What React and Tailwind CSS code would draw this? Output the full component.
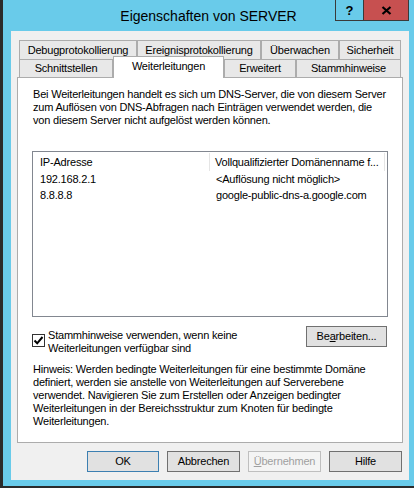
import React from "react";

const rowOneTabs = [
  { label: "Debugprotokollierung", w: "w-[118px]" },
  { label: "Ereignisprotokollierung", w: "w-[124px]" },
  { label: "Überwachen", w: "w-[78px]" },
  { label: "Sicherheit", w: "w-[62px]" },
];

const forwarders = [
  { ip: "192.168.2.1", name: "<Auflösung nicht möglich>" },
  { ip: "8.8.8.8", name: "google-public-dns-a.google.com" },
];

const Tab = ({ label, w, h = "h-[18px]" }) => (
  <div
    className={`${w} ${h} flex items-center justify-center border-t border-x border-[#acacac] bg-[#e8e8e8] whitespace-nowrap`}
  >
    {label}
  </div>
);

const DialogButton = ({ children, variant = "normal", w = "w-[73px]" }) => {
  const styles = {
    normal: "border-[#707070] bg-[#e1e1e1] text-black",
    default: "border-[#3c7fb1] bg-[#e1e1e1] text-black",
    disabled: "border-[#bfbfbf] bg-[#f4f4f4] text-[#a0a0a0]",
  };
  return (
    <button
      className={`${w} h-[21px] border ${styles[variant]} flex items-center justify-center leading-[13px]`}
    >
      {children}
    </button>
  );
};

const App = () => {
  return (
    <div className="w-[414px] h-[488px] bg-[#69cbea] border-l-[3px] border-b-[2px] border-[#2b2b2b] flex flex-col relative overflow-hidden font-['Liberation_Sans',Arial,sans-serif] text-[11px] leading-[13px] tracking-[-0.2px] text-black">
      {/* title bar */}
      <div className="h-[31px] shrink-0 flex justify-center pt-[8px]">
        <span className="text-[14px] leading-[16px] tracking-normal">
          Eigenschaften von SERVER
        </span>
      </div>
      <div className="absolute top-0 right-[5px] flex">
        <div className="w-[29px] h-[21px] border-x border-b border-[#3a3a3a] flex items-center justify-center font-bold text-[13px] tracking-normal">
          ?
        </div>
        <div className="w-[45px] h-[21px] border-r border-b border-[#3a3a3a] bg-[#c75050] flex items-center justify-center">
          <svg width="11" height="9" viewBox="0 0 11 9">
            <path d="M1.5 1 L9.5 8 M9.5 1 L1.5 8" stroke="#000" strokeWidth="2.2" />
          </svg>
        </div>
      </div>

      {/* client area */}
      <div className="ml-[8px] w-[398px] h-[449px] bg-[#f0f0f0] pt-[9px] flex flex-col">
        <div className="ml-[8px] flex h-[19px]">
          {rowOneTabs.map((t) => (
            <Tab key={t.label} label={t.label} w={t.w} h="h-[19px]" />
          ))}
        </div>
        <div className="ml-[8px] -mt-[3px] flex items-end h-[21px] relative z-10">
          <Tab label="Schnittstellen" w="w-[94px]" />
          <div className="w-[111px] h-[22px] -mb-px flex items-center justify-center pb-[3px] border-t border-x border-[#acacac] bg-white whitespace-nowrap">
            Weiterleitungen
          </div>
          <Tab label="Erweitert" w="w-[72px]" />
          <Tab label="Stammhinweise" w="w-[105px]" />
        </div>

        {/* tab panel */}
        <div className="mx-[6px] h-[366px] border border-[#acacac] bg-white px-[14px] pt-[10px] flex flex-col">
          <p className="pl-px whitespace-nowrap">
            Bei Weiterleitungen handelt es sich um DNS-Server, die von diesem Server
            <br />
            zum Auflösen von DNS-Abfragen nach Einträgen verwendet werden, die
            <br />
            von diesem Server nicht aufgelöst werden können.
          </p>

          <div className="mt-[24px] h-[166px] shrink-0 border border-[#828790] bg-white flex flex-col">
            <div className="h-[19px] flex pt-px">
              <div className="w-[177px] flex items-center pl-[7px] border-r border-[#e5e5e5]">
                IP-Adresse
              </div>
              <div className="w-[175px] flex items-center pl-[5px] border-r border-[#e5e5e5] whitespace-nowrap overflow-hidden">
                Vollqualifizierter Domänenname f...
              </div>
            </div>
            {forwarders.map((f) => (
              <div key={f.ip} className="h-[16px] flex items-center">
                <div className="w-[177px] pl-[7px]">{f.ip}</div>
                <div className="pl-[6px] whitespace-nowrap">{f.name}</div>
              </div>
            ))}
          </div>

          <div className="mt-[9px] flex justify-between items-start pr-px">
            <div className="mt-[3px] flex items-start">
              <div className="mt-[5px] w-[13px] h-[13px] border border-[#333] bg-white flex items-center justify-center">
                <svg width="11" height="11" viewBox="0 0 11 11">
                  <path d="M1.5 5.5 L4.2 8.3 L9.5 2" fill="none" stroke="#000" strokeWidth="2" />
                </svg>
              </div>
              <label className="ml-[3px] whitespace-nowrap">
                Stammhinweise verwenden, wenn keine
                <br />
                Weiterleitungen verfügbar sind
              </label>
            </div>
            <DialogButton w="w-[81px]">
              <span>
                Be<span className="underline">a</span>rbeiten...
              </span>
            </DialogButton>
          </div>

          <p className="mt-[8px] pl-px whitespace-nowrap">
            Hinweis: Werden bedingte Weiterleitungen für eine bestimmte Domäne
            <br />
            definiert, werden sie anstelle von Weiterleitungen auf Serverebene
            <br />
            verwendet. Navigieren Sie zum Erstellen oder Anzeigen bedingter
            <br />
            Weiterleitungen in der Bereichsstruktur zum Knoten für bedingte
            <br />
            Weiterleitungen.
          </p>
        </div>

        {/* dialog buttons */}
        <div className="mt-[8px] mr-[7px] flex justify-end gap-[8px]">
          <DialogButton variant="default" w="w-[72px]">OK</DialogButton>
          <DialogButton>Abbrechen</DialogButton>
          <DialogButton variant="disabled">
            <span>
              <span className="underline">Ü</span>bernehmen
            </span>
          </DialogButton>
          <DialogButton>Hilfe</DialogButton>
        </div>
      </div>
    </div>
  );
};

export default App;
